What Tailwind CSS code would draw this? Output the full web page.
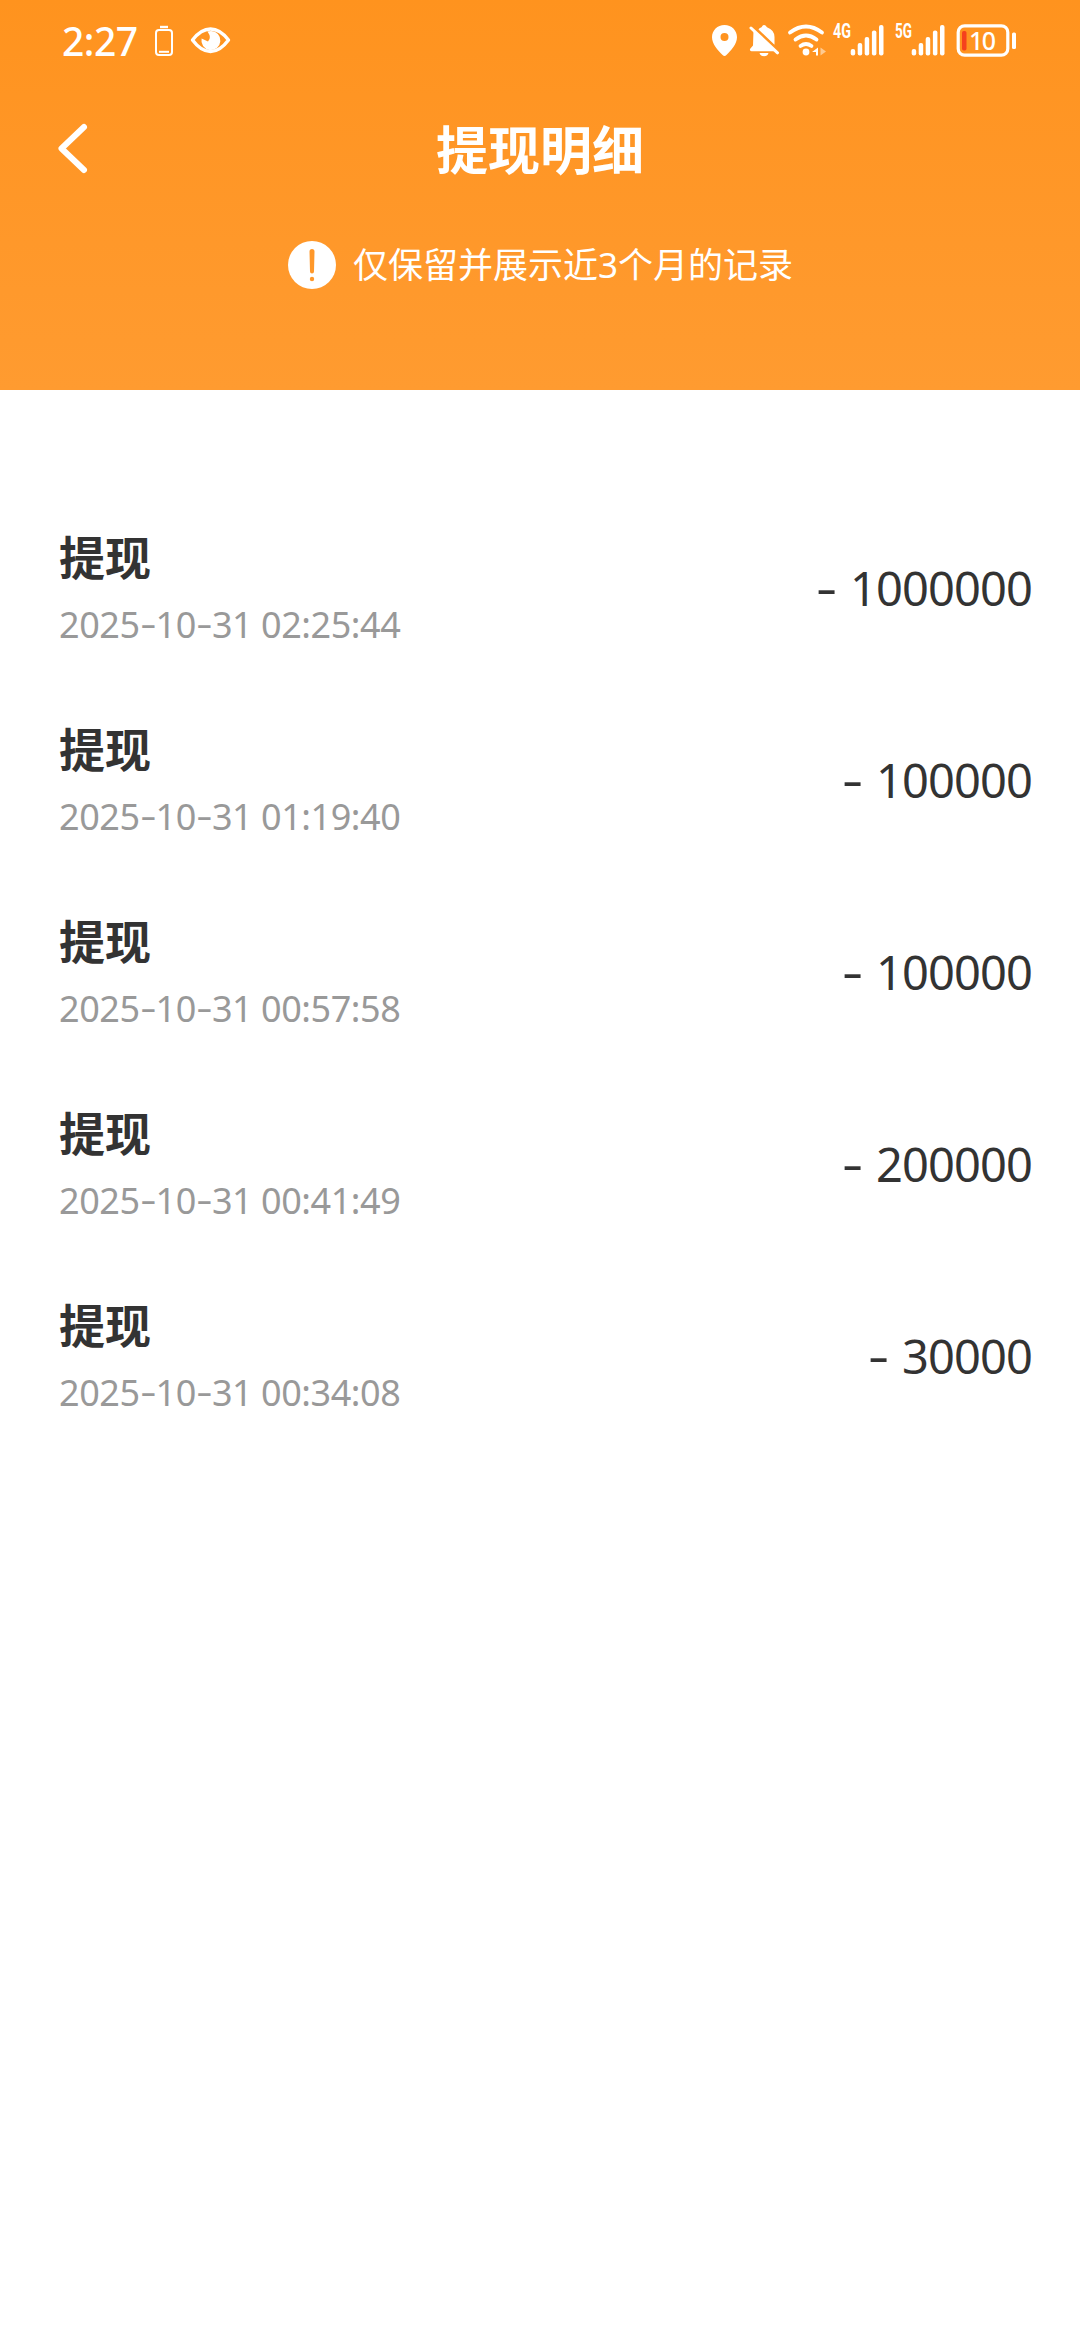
<!DOCTYPE html>
<html lang="zh-CN">
<head>
<meta charset="utf-8">
<title>提现明细</title>
<script src="https://cdn.jsdelivr.net/npm/@tailwindcss/browser@4"></script>
</head>
<body class="h-[2340px] w-[1080px] overflow-hidden bg-white font-['Noto_Sans','Noto_Sans_CJK_SC',sans-serif] text-[#333333]">
<header class="h-[390px] bg-linear-to-b from-[#ff931e] to-[#ff9b30] text-white">
  <div class="flex h-20 items-start justify-between pr-16 pl-[62px]">
    <div class="flex h-20 items-center">
      <span class="w-[92px] pt-0.5 text-[39px] leading-[82px] font-medium tracking-[-0.5px]">2:27</span>
      <svg class="h-20 w-20" viewBox="154 0 80 80" fill="none" stroke="#fff">
        <rect x="156" y="30" width="16" height="25" rx="3" stroke-width="2"/>
        <path d="M160 27h8" stroke-width="2.4"/><path d="M159 51.8h10" stroke-width="2"/>
        <path d="M192.500 40Q201 29 210.500 29T228.500 40Q220 51.500 210.500 51.500T192.500 40Z" stroke-width="3.4" stroke-linejoin="round"/>
        <path d="M211 31A9.500 9.500 0 1 1 201.600 38.500L208 41.500Q212 38 207.500 31.600Z" fill="#fff" stroke="none"/>
      </svg>
    </div>
    <div class="flex h-20">
      <svg class="h-20 w-[120px]" viewBox="711 0 120 80">
        <path fill="#fff" fill-rule="evenodd" d="M724.500 25C717.300 25 712 30.500 712 37.200C712 44 718 50.500 722.600 55Q724.500 57 726.400 55C731 50.500 737 44 737 37.200C737 30.500 731.700 25 724.500 25ZM724.500 33a4 4 0 1 1 0 8a4 4 0 0 1 0-8Z"/>
        <path fill="#fff" d="M753.500 30L776 51.200H751.500Q749.500 51 750 49L753 45.500ZM758.500 29.500Q759 28 761.500 27.200Q764 23 767 27.200Q774.500 30 774.500 37V44.800Z M759.500 53h9q-1 3.200-4.500 3.200T759.500 53Z"/>
        <path d="M751 28L777.500 52.800" stroke="#fff" stroke-width="3" stroke-linecap="round"/>
        <g fill="none" stroke="#fff" stroke-width="3.800" stroke-linecap="round"><path d="M790 32.500Q806 20.500 822 32.500"/><path d="M795.500 39.500Q806 31.500 816.500 39.500"/><path d="M800.500 46Q806 42 811.500 46"/></g>
        <circle cx="806" cy="52" r="3.400" fill="#fff"/>
        <path d="M818 47.500v8h-2v-3.500h-4z" fill="#fff"/><path d="M820.500 47.500l5.500 4-5.500 4z" fill="#fff" opacity=".5"/>
      </svg>
      <svg class="h-20 w-[62px]" viewBox="831 0 62 80" fill="#fff">
        <text x="833" y="38.300" font-size="20" font-weight="700" font-family="Roboto, sans-serif" textLength="18" lengthAdjust="spacingAndGlyphs">4G</text>
        <rect x="850.700" y="49" width="4.500" height="6.500" rx="2"/><rect x="857.700" y="43" width="4.500" height="12.500" rx="2"/><rect x="864.700" y="37" width="4.500" height="18.500" rx="2"/><rect x="871.900" y="30.500" width="4.500" height="25" rx="2"/><rect x="879" y="25" width="4.500" height="30.500" rx="2"/>
      </svg>
      <svg class="h-20 w-[62px]" viewBox="893 0 62 80" fill="#fff">
        <text x="895" y="38.300" font-size="20" font-weight="700" font-family="Roboto, sans-serif" textLength="17" lengthAdjust="spacingAndGlyphs">5G</text>
        <rect x="911.700" y="49" width="4.500" height="6.500" rx="2"/><rect x="918.700" y="43" width="4.500" height="12.500" rx="2"/><rect x="925.700" y="37" width="4.500" height="18.500" rx="2"/><rect x="932.900" y="30.500" width="4.500" height="25" rx="2"/><rect x="940" y="25" width="4.500" height="30.500" rx="2"/>
      </svg>
      <svg class="h-20 w-[61px]" viewBox="955 0 61 80">
        <rect x="958.200" y="25.800" width="49.600" height="29.400" rx="6.500" fill="none" stroke="#fff" stroke-width="3.200"/>
        <rect x="1012" y="32.500" width="4" height="16.500" rx="1.500" fill="#fff"/>
        <rect x="962" y="31" width="4.500" height="19.500" rx="1.800" fill="#f5411d"/>
        <text x="969" y="49.500" font-size="25" font-weight="500" font-family="Noto Sans, sans-serif" fill="#fff" textLength="27" lengthAdjust="spacing">10</text>
      </svg>
    </div>
  </div>
  <div class="grid h-[140px] grid-cols-[120px_1fr_120px] items-center">
    <svg class="h-[140px] w-[120px]" viewBox="0 80 120 140" fill="none" stroke="#fff" stroke-width="6" stroke-linecap="round" stroke-linejoin="round"><path d="M84 127L61.500 148.500L84 170"/></svg>
    <h1 class="text-center text-[52px] leading-[140px] font-bold">提现明细</h1>
  </div>
  <div class="flex h-[90px] items-center pl-[288px]">
    <svg class="h-12 w-12" viewBox="0 0 48 48"><circle cx="24" cy="24" r="24" fill="#fff"/><path d="M21.500 10.500a2.500 2.500 0 0 1 5 0l-.5 20a2 2 0 0 1-4 0z" fill="#ff982a"/><circle cx="24" cy="38" r="2.200" fill="#ff982a"/></svg>
    <p class="mb-0.5 ml-[17px] text-[35px] leading-none whitespace-nowrap">仅保留并展示近3个月的记录</p>
  </div>
</header>
<main class="pt-[103px]">
  <div class="flex h-48 items-center justify-between pr-12 pl-[59px]">
    <div class="flex flex-col pt-[5px]"><h2 class="text-[46px] leading-[64px] font-bold">提现</h2><time class="pt-0.5 text-[36px] leading-[68px] tracking-[-0.45px] text-[#999999]">2025<i class="inline-block w-4 -translate-y-0.5 scale-x-140 text-center not-italic">-</i>10<i class="inline-block w-4 -translate-y-0.5 scale-x-140 text-center not-italic">-</i>31 02:25:44</time></div>
    <p class="pb-0.5 text-[47px] leading-none tracking-[-0.9px]"><i class="mr-[3px] inline-block w-5 -translate-y-px scale-x-140 text-center not-italic">-</i> 1000000</p>
  </div>
  <div class="flex h-48 items-center justify-between pr-12 pl-[59px]">
    <div class="flex flex-col pt-[5px]"><h2 class="text-[46px] leading-[64px] font-bold">提现</h2><time class="pt-0.5 text-[36px] leading-[68px] tracking-[-0.45px] text-[#999999]">2025<i class="inline-block w-4 -translate-y-0.5 scale-x-140 text-center not-italic">-</i>10<i class="inline-block w-4 -translate-y-0.5 scale-x-140 text-center not-italic">-</i>31 01:19:40</time></div>
    <p class="pb-0.5 text-[47px] leading-none tracking-[-0.9px]"><i class="mr-[3px] inline-block w-5 -translate-y-px scale-x-140 text-center not-italic">-</i> 100000</p>
  </div>
  <div class="flex h-48 items-center justify-between pr-12 pl-[59px]">
    <div class="flex flex-col pt-[5px]"><h2 class="text-[46px] leading-[64px] font-bold">提现</h2><time class="pt-0.5 text-[36px] leading-[68px] tracking-[-0.45px] text-[#999999]">2025<i class="inline-block w-4 -translate-y-0.5 scale-x-140 text-center not-italic">-</i>10<i class="inline-block w-4 -translate-y-0.5 scale-x-140 text-center not-italic">-</i>31 00:57:58</time></div>
    <p class="pb-0.5 text-[47px] leading-none tracking-[-0.9px]"><i class="mr-[3px] inline-block w-5 -translate-y-px scale-x-140 text-center not-italic">-</i> 100000</p>
  </div>
  <div class="flex h-48 items-center justify-between pr-12 pl-[59px]">
    <div class="flex flex-col pt-[5px]"><h2 class="text-[46px] leading-[64px] font-bold">提现</h2><time class="pt-0.5 text-[36px] leading-[68px] tracking-[-0.45px] text-[#999999]">2025<i class="inline-block w-4 -translate-y-0.5 scale-x-140 text-center not-italic">-</i>10<i class="inline-block w-4 -translate-y-0.5 scale-x-140 text-center not-italic">-</i>31 00:41:49</time></div>
    <p class="pb-0.5 text-[47px] leading-none tracking-[-0.9px]"><i class="mr-[3px] inline-block w-5 -translate-y-px scale-x-140 text-center not-italic">-</i> 200000</p>
  </div>
  <div class="flex h-48 items-center justify-between pr-12 pl-[59px]">
    <div class="flex flex-col pt-[5px]"><h2 class="text-[46px] leading-[64px] font-bold">提现</h2><time class="pt-0.5 text-[36px] leading-[68px] tracking-[-0.45px] text-[#999999]">2025<i class="inline-block w-4 -translate-y-0.5 scale-x-140 text-center not-italic">-</i>10<i class="inline-block w-4 -translate-y-0.5 scale-x-140 text-center not-italic">-</i>31 00:34:08</time></div>
    <p class="pb-0.5 text-[47px] leading-none tracking-[-0.9px]"><i class="mr-[3px] inline-block w-5 -translate-y-px scale-x-140 text-center not-italic">-</i> 30000</p>
  </div>
</main>
</body>
</html>
